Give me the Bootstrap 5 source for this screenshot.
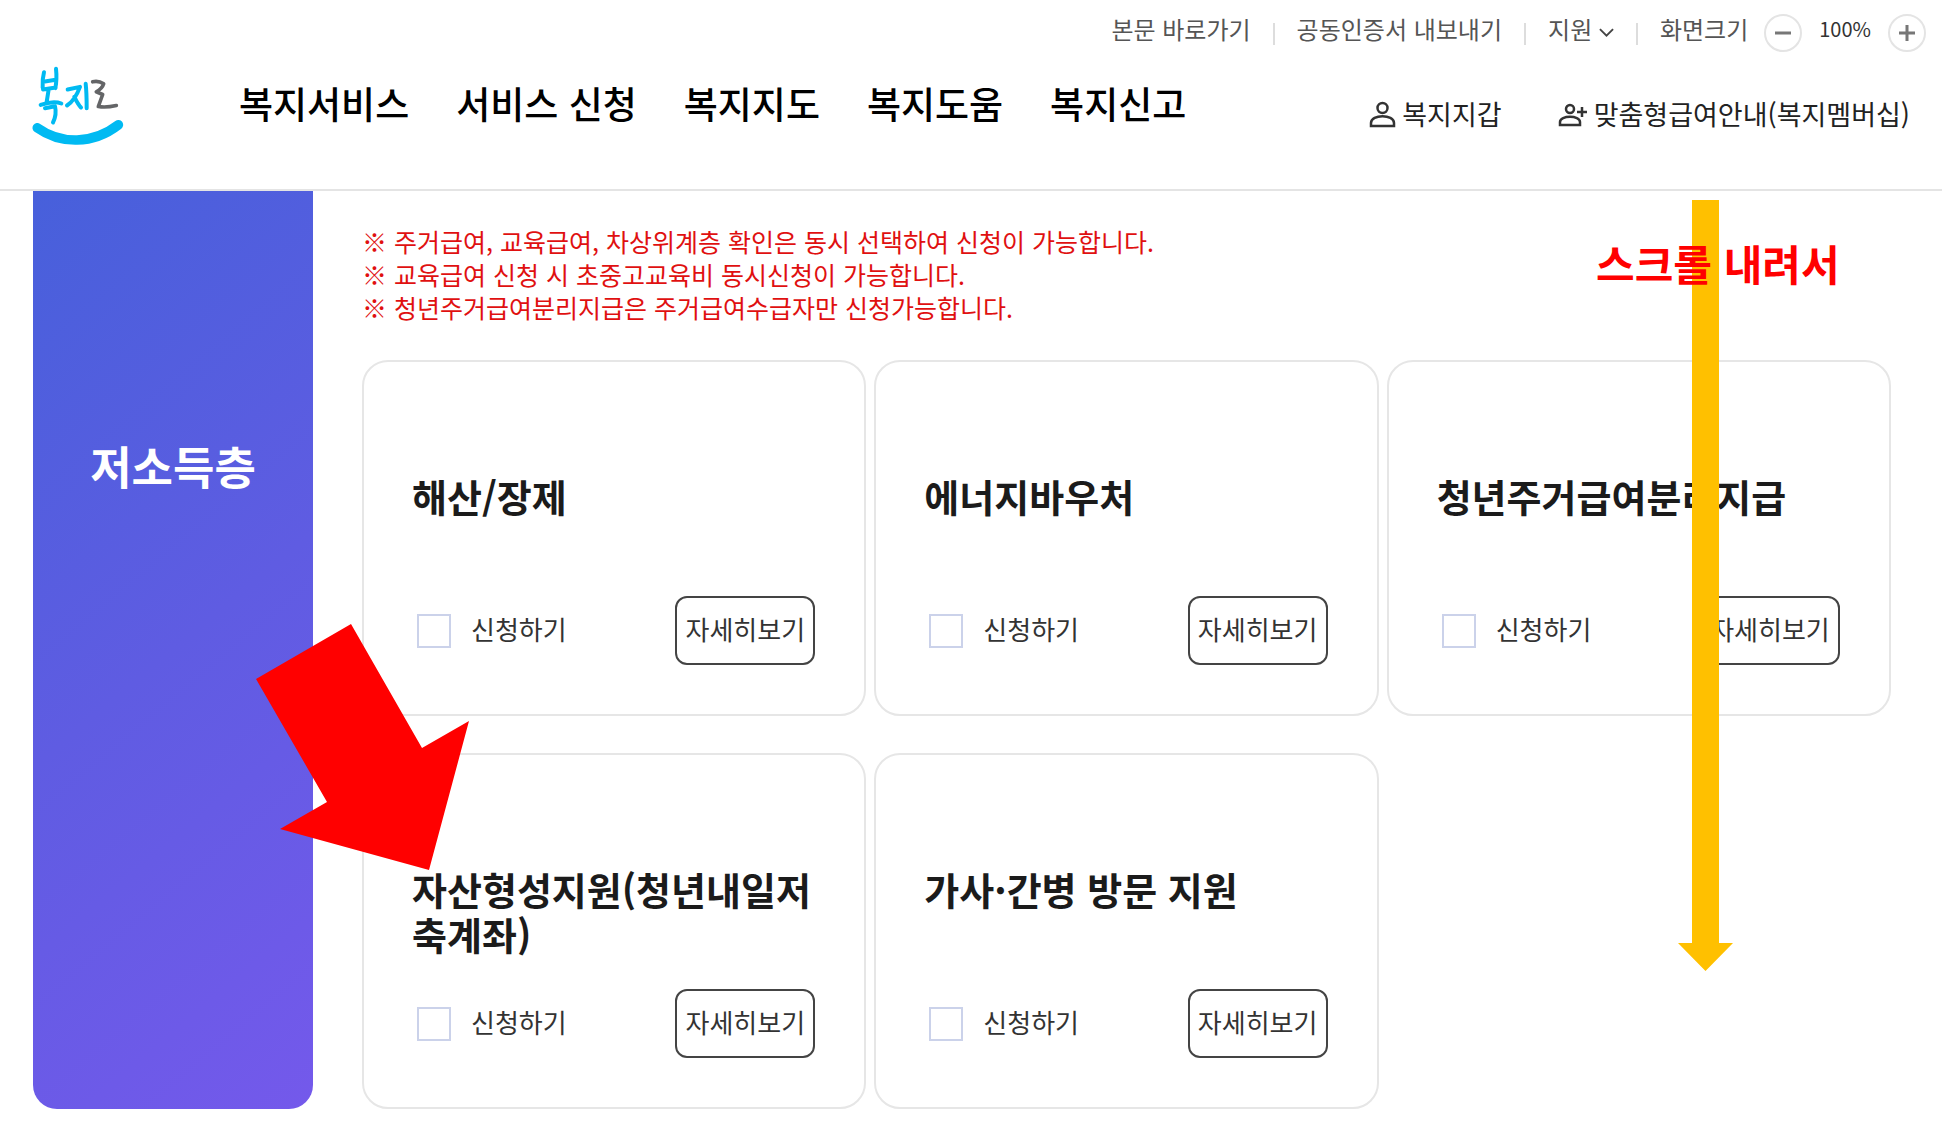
<!DOCTYPE html>
<html lang="ko">
<head>
<meta charset="utf-8">
<meta name="viewport" content="width=device-width, initial-scale=1">
<title>복지로</title>
<link href="https://cdn.jsdelivr.net/npm/bootstrap@5.3.0/dist/css/bootstrap.min.css" rel="stylesheet">
<style>
body { font-family: "Noto Sans CJK KR", sans-serif; color: #333; background: #fff; }
a { color: inherit; text-decoration: none; }
.site-header { padding: 14px 32px 0; border-bottom: 2px solid #e4e4e4; min-height: 191px; }
.brand-logo { margin-top: 14px; width: 92px; height: 80px; }
.main-menu { gap: 47px; margin: 26px 0 0 115px; font-size: 37px; line-height: 50px; font-weight: 500; color: #000; }
.tools { font-size: 24px; line-height: 30px; color: #555; margin-right: -16px; height: 38px; }
.tools .divider { width: 2px; height: 22px; background: #ddd; margin: 9px 22px 0; }
.tools .zoom-value { font-size: 20px; color: #333; margin: 0 17px; }
.round-btn { width: 38px; height: 38px; border: 2px solid #e4e4e4; border-radius: 50%; background: #fff; }
.personal { font-size: 27px; line-height: 40px; gap: 56px; margin-top: 42px; color: #222; }
.personal a { gap: 6px; }
.board { padding: 0 51px 16px 33px; gap: 49px; }
.side-title { width: 280px; padding-top: 245px; border-radius: 0 0 24px 24px; background: linear-gradient(140deg, #4760db, #5f5ce2 50%, #7459eb); font-size: 45px; line-height: 60px; font-weight: 700; }
.notes { color: #e01010; font-size: 25px; line-height: 33px; padding-top: 34px; margin-bottom: 36px; }
.services { --bs-gutter-x: 8px; --bs-gutter-y: 37px; }
.service { min-height: 356px; border: 2px solid #e6e6e6; border-radius: 26px; padding: 111px 49px 49px 48px; }
.service h2 { font-size: 38px; line-height: 45px; font-weight: 700; color: #1b1b1b; }
.service .form-check-input { width: 34px; height: 34px; margin: 0; border: 2px solid #cbd2ea; border-radius: 0; }
.service .choose { gap: 20px; padding-left: 5px; font-size: 26px; line-height: 34px; }
.service .choose label { padding-bottom: 4px; }
.service .btn { width: 140px; height: 69px; padding: 0 0 4px; border: 2px solid #444; border-radius: 12px; font-size: 26px; line-height: 34px; color: #333; white-space: nowrap; }
.scroll-arrow { left: 1678px; top: 9px; }
.scroll-hint { left: 1596px; top: 44px; font-size: 42px; line-height: 56px; font-weight: 700; color: #f00; }
.pick-arrow { left: 256px; top: 433px; }
</style>
<script src="https://cdn.jsdelivr.net/npm/bootstrap@5.3.0/dist/js/bootstrap.bundle.min.js"></script>
</head>
<body>
<header class="site-header">
  <div class="tools d-flex justify-content-end text-nowrap">
    <a href="#">본문 바로가기</a><span class="divider"></span>
    <a href="#">공동인증서 내보내기</a><span class="divider"></span>
    <a href="#">지원 <svg width="15" height="12" viewBox="0 0 16 12" fill="none" stroke="#444" stroke-width="2"><path d="M1 3l7 7 7-7"/></svg></a><span class="divider"></span>
    <span class="me-3">화면크기</span>
    <button type="button" class="round-btn p-0 d-flex align-items-center justify-content-center" aria-label="축소"><svg width="16" height="16" stroke="#777" stroke-width="3"><path d="M0 8h16"/></svg></button>
    <span class="zoom-value">100%</span>
    <button type="button" class="round-btn p-0 d-flex align-items-center justify-content-center" aria-label="확대"><svg width="16" height="16" stroke="#777" stroke-width="3"><path d="M0 8h16M8 0v16"/></svg></button>
  </div>
  <div class="d-flex align-items-start">
    <a href="#" aria-label="복지로" class="d-block flex-shrink-0">
      <svg class="brand-logo d-block" viewBox="36 34 276 237" fill="none" stroke-linecap="round" stroke-linejoin="round">
        <g stroke="#00baf2" stroke-width="12">
          <path d="M72 51C68 66 67 82 68 97M108 41C110 60 110 80 106 99M70 80L107 74M69 103L107 97M86 103L80 140M62 149C82 142 104 137 124 145M75 159L105 153C109 170 105 190 99 202"/>
          <path d="M143 103L180 95C170 122 158 140 141 151M163 125C170 139 175 149 183 157M197 86C200 112 200 134 200 159"/>
        </g>
        <path stroke="#646567" stroke-width="11" d="M218 80C230 77 242 80 251 86C248 96 240 104 229 110L248 118L235 154C252 157 271 155 289 151"/>
        <path stroke="#00baf2" stroke-width="29" d="M52 218C122 268 219 268 295 209"/>
      </svg>
    </a>
    <nav class="main-menu d-flex text-nowrap">
      <a href="#">복지서비스</a><a href="#">서비스 신청</a><a href="#">복지지도</a><a href="#">복지도움</a><a href="#">복지신고</a>
    </nav>
    <div class="personal d-flex ms-auto text-nowrap">
      <a href="#" class="d-flex align-items-center"><svg width="27" height="27" viewBox="0 0 27 27" fill="none" stroke="#333" stroke-width="2.500"><circle cx="13.500" cy="7" r="5"/><path d="M2 25v-3c0-9 23-9 23 0v3z"/></svg>복지지갑</a>
      <a href="#" class="d-flex align-items-center"><svg width="30" height="27" viewBox="0 0 30 27" fill="none" stroke="#333" stroke-width="2.500"><circle cx="12" cy="8" r="4"/><path d="M2 24v-3c0-7 20-7 20 0v3zM24 6v10M19 11h10"/></svg>맞춤형급여안내(복지멤버십)</a>
    </div>
  </div>
</header>
<main class="board position-relative d-flex">
  <aside class="side-title text-white text-center flex-shrink-0">저소득층</aside>
  <section class="flex-grow-1">
    <div class="notes">
      <div>※ 주거급여, 교육급여, 차상위계층 확인은 동시 선택하여 신청이 가능합니다.</div>
      <div>※ 교육급여 신청 시 초중고교육비 동시신청이 가능합니다.</div>
      <div>※ 청년주거급여분리지급은 주거급여수급자만 신청가능합니다.</div>
    </div>
    <div class="services row mt-0">
      <div class="col-4 mt-0"><article class="service d-flex flex-column justify-content-between"><h2 class="m-0">해산/장제</h2>
        <div class="d-flex justify-content-between align-items-center"><div class="choose d-flex align-items-center"><input class="form-check-input" type="checkbox" id="s1"><label for="s1">신청하기</label></div><button type="button" class="btn">자세히보기</button></div></article></div>
      <div class="col-4 mt-0"><article class="service d-flex flex-column justify-content-between"><h2 class="m-0">에너지바우처</h2>
        <div class="d-flex justify-content-between align-items-center"><div class="choose d-flex align-items-center"><input class="form-check-input" type="checkbox" id="s2"><label for="s2">신청하기</label></div><button type="button" class="btn">자세히보기</button></div></article></div>
      <div class="col-4 mt-0"><article class="service d-flex flex-column justify-content-between"><h2 class="m-0">청년주거급여분리지급</h2>
        <div class="d-flex justify-content-between align-items-center"><div class="choose d-flex align-items-center"><input class="form-check-input" type="checkbox" id="s3"><label for="s3">신청하기</label></div><button type="button" class="btn">자세히보기</button></div></article></div>
      <div class="col-4"><article class="service d-flex flex-column justify-content-between"><h2 class="m-0">자산형성지원(청년내일저축계좌)</h2>
        <div class="d-flex justify-content-between align-items-center"><div class="choose d-flex align-items-center"><input class="form-check-input" type="checkbox" id="s4"><label for="s4">신청하기</label></div><button type="button" class="btn">자세히보기</button></div></article></div>
      <div class="col-4"><article class="service d-flex flex-column justify-content-between"><h2 class="m-0">가사·간병 방문 지원</h2>
        <div class="d-flex justify-content-between align-items-center"><div class="choose d-flex align-items-center"><input class="form-check-input" type="checkbox" id="s5"><label for="s5">신청하기</label></div><button type="button" class="btn">자세히보기</button></div></article></div>
    </div>
  </section>
  <svg class="scroll-arrow position-absolute" width="55" height="772" fill="#ffc000"><path d="M14 0h27v743h14L27.500 771 0 743h14z"/></svg>
  <div class="scroll-hint position-absolute text-nowrap">스크롤 내려서</div>
  <svg class="pick-arrow position-absolute" width="214" height="246" fill="#f00"><path d="M95 0L0 55l71 123-47 27 149 41 40-149-47 27z"/></svg>
</main>
</body>
</html>
